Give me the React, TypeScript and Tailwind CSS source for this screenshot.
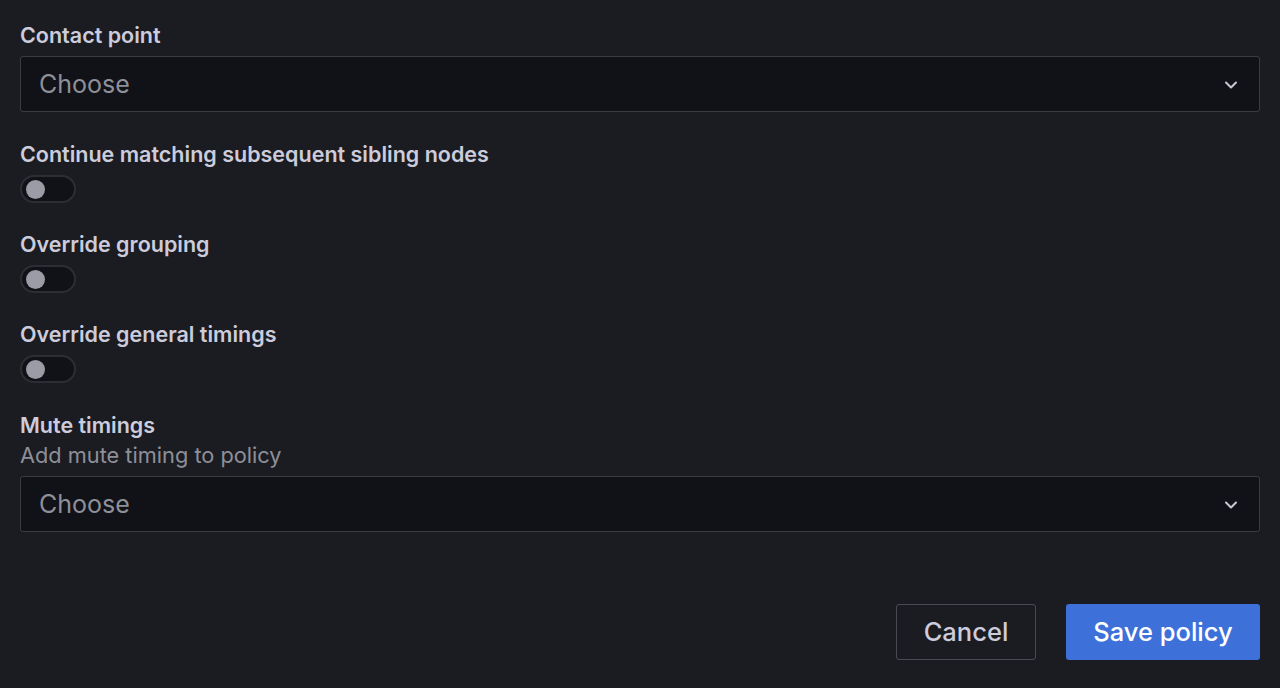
import { ChevronDown } from 'lucide-react';

function Label({ children }: { children: React.ReactNode }) {
  return <div className="text-[21.5px] leading-[28px] font-semibold text-[#ccccdc]">{children}</div>;
}

function Select() {
  return (
    <div className="mt-[7px] flex h-[56px] w-full items-center justify-between rounded-[3px] border border-[#3b3c42] bg-[#111217] pl-[18px] pr-[18px] pt-[2px]">
      <span className="text-[25px] text-[#8e8f99]">Choose</span>
      <ChevronDown size={20} strokeWidth={2.5} className="text-[#c7c8d2]" />
    </div>
  );
}

function Toggle() {
  return (
    <div className="mt-[7px] flex h-[28px] w-[56px] items-center rounded-full border-2 border-[#2c2e34] bg-[#111217] pl-[4px]">
      <div className="h-[19px] w-[19px] rounded-full bg-[#9b9ca6]" />
    </div>
  );
}

export default function App() {
  // grafana notification policy form, dark theme
  return (
    <main
      className="flex h-[688px] w-[1280px] flex-col bg-[#1b1c21] px-[20px] pt-[21px]"
      style={{ fontFamily: 'Inter, "Noto Sans", sans-serif' }}
    >
      <Label>Contact point</Label>
      <Select />

      <div className="mt-[28px]">
        <Label>Continue matching subsequent sibling nodes</Label>
        <Toggle />
      </div>

      <div className="mt-[27px]">
        <Label>Override grouping</Label>
        <Toggle />
      </div>

      <div className="mt-[27px]">
        <Label>Override general timings</Label>
        <Toggle />
      </div>

      <div className="mt-[28px]">
        <Label>Mute timings</Label>
        <div className="mt-[2px] text-[21.75px] leading-[28px] text-[#8e8f99]">Add mute timing to policy</div>
        <Select />
      </div>

      <div className="mt-[72px] flex justify-end gap-[30px]">
        <button className="h-[56px] w-[140px] rounded-[3px] border border-[#4a4b52] bg-transparent text-[25.5px] font-medium text-[#ccccdc]">
          Cancel
        </button>
        <button className="h-[56px] w-[194px] rounded-[3px] bg-[#3d71d9] text-[25.5px] font-medium text-white">
          Save policy
        </button>
      </div>
    </main>
  );
}
